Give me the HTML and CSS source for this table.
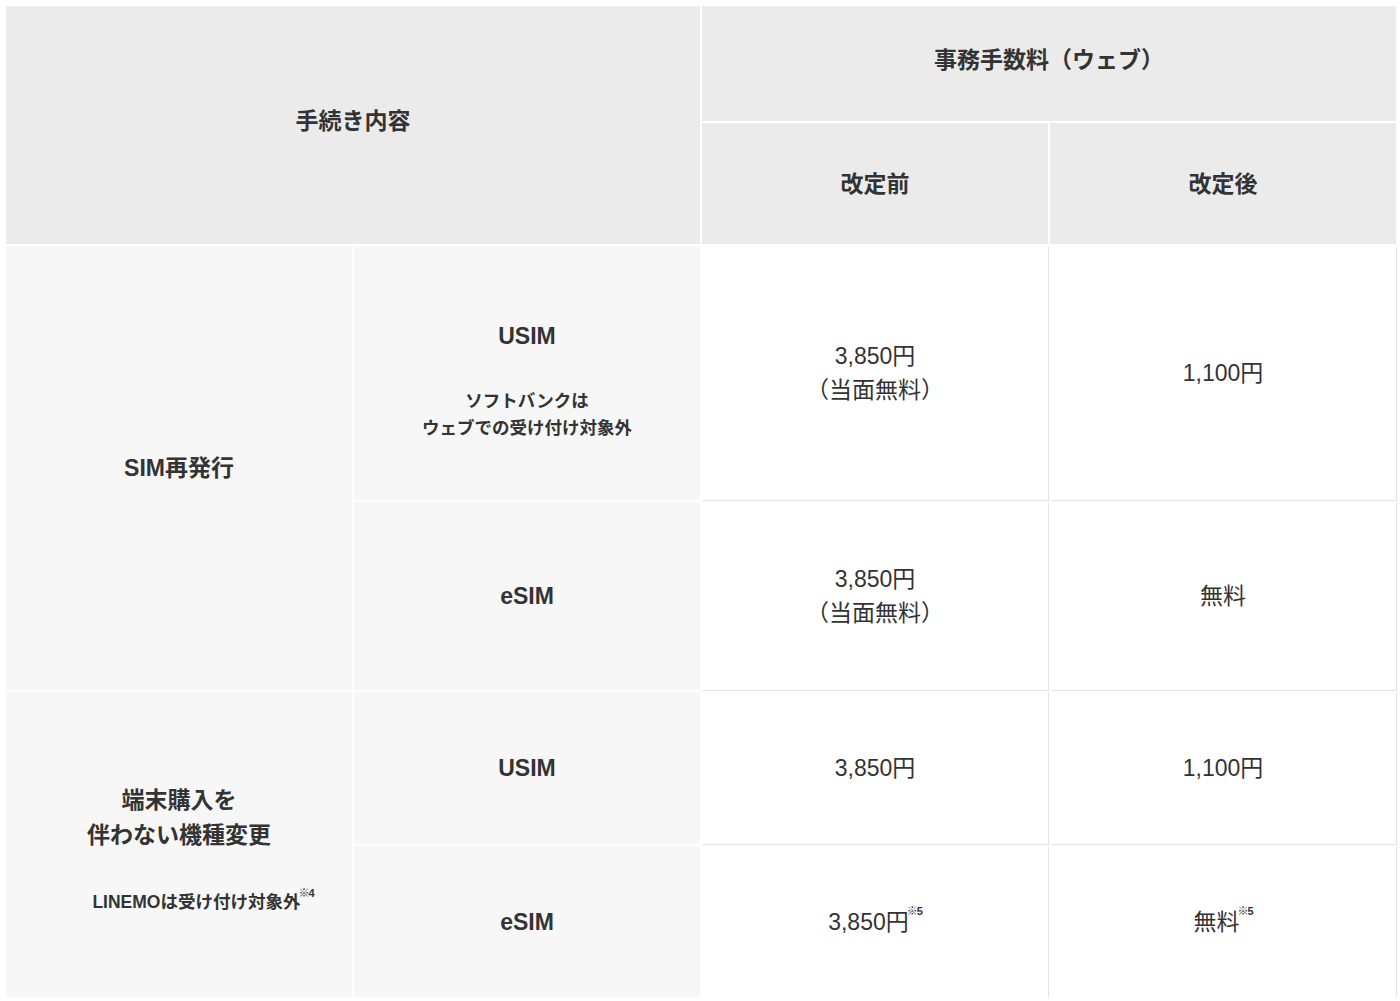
FILE: index.html
```html
<!DOCTYPE html>
<html lang="ja">
<head>
<meta charset="utf-8">
<link rel="stylesheet" href="styles.css">
</head>
<body>
<div class="table">
  <div class="cell head proc">手続き内容</div>
  <div class="cell head fee">事務手数料（ウェブ）</div>
  <div class="cell head">改定前</div>
  <div class="cell head">改定後</div>

  <div class="cell side sim">SIM再発行</div>
  <div class="cell side stack first">
    <div class="main">USIM</div>
    <div class="note">ソフトバンクは<br>ウェブでの受け付け対象外</div>
  </div>
  <div class="cell val">3,850円<br>（当面無料）</div>
  <div class="cell val">1,100円</div>

  <div class="cell side main">eSIM</div>
  <div class="cell val">3,850円<br>（当面無料）</div>
  <div class="cell val">無料</div>

  <div class="cell side kishu stack">
    <div class="main two">端末購入を<br>伴わない機種変更</div>
    <div class="note shifted">LINEMOは受け付け対象外<sup>※4</sup></div>
  </div>
  <div class="cell side main">USIM</div>
  <div class="cell val">3,850円</div>
  <div class="cell val">1,100円</div>

  <div class="cell side main">eSIM</div>
  <div class="cell val">3,850円<sup>※5</sup></div>
  <div class="cell val">無料<sup>※5</sup></div>
</div>
</body>
</html>
```
FILE: styles.css
```css
html, body {
  margin: 0;
  padding: 0;
  background: #fff;
}
body {
  padding: 6px 4px 0 6px;
  font-family: "Liberation Sans", "Noto Sans CJK JP", sans-serif;
  color: #333;
}
.table {
  display: grid;
  width: 1390px;
  grid-template-columns: repeat(4, 346px);
  grid-template-rows: 115px 121px 254px 188px 152px 151px;
  gap: 2px;
}
.cell {
  display: flex;
  align-items: center;
  justify-content: center;
  text-align: center;
  font-size: 23px;
  line-height: 34px;
}
.head {
  background: #ebebeb;
  font-weight: bold;
}
.proc {
  grid-column: 1 / 3;
  grid-row: 1 / 3;
  padding-bottom: 8px;
}
.fee {
  grid-column: 3 / 5;
  padding-bottom: 8px;
}
.side {
  background: #f7f7f7;
  font-weight: bold;
}
.sim {
  grid-row: 3 / 5;
}
.kishu {
  grid-row: 5 / 7;
  padding-top: 9px;
}
.stack {
  flex-direction: column;
}
.stack .note {
  font-size: 17.5px;
  line-height: 27px;
  margin-top: 35px;
}
.stack.kishu .note {
  margin-top: 36px;
}
.note.shifted {
  margin-left: 48px;
}
.first {
  padding-top: 15px;
}
.two {
  line-height: 35px;
}
.val {
  background: #fff;
  box-shadow: 1px 1px 0 #e2e2e2;
}
sup {
  font-size: 11px;
  font-weight: bold;
  line-height: 0;
  vertical-align: 0;
  position: relative;
  top: -11px;
  margin-left: -2px;
  letter-spacing: -1px;
}
```
